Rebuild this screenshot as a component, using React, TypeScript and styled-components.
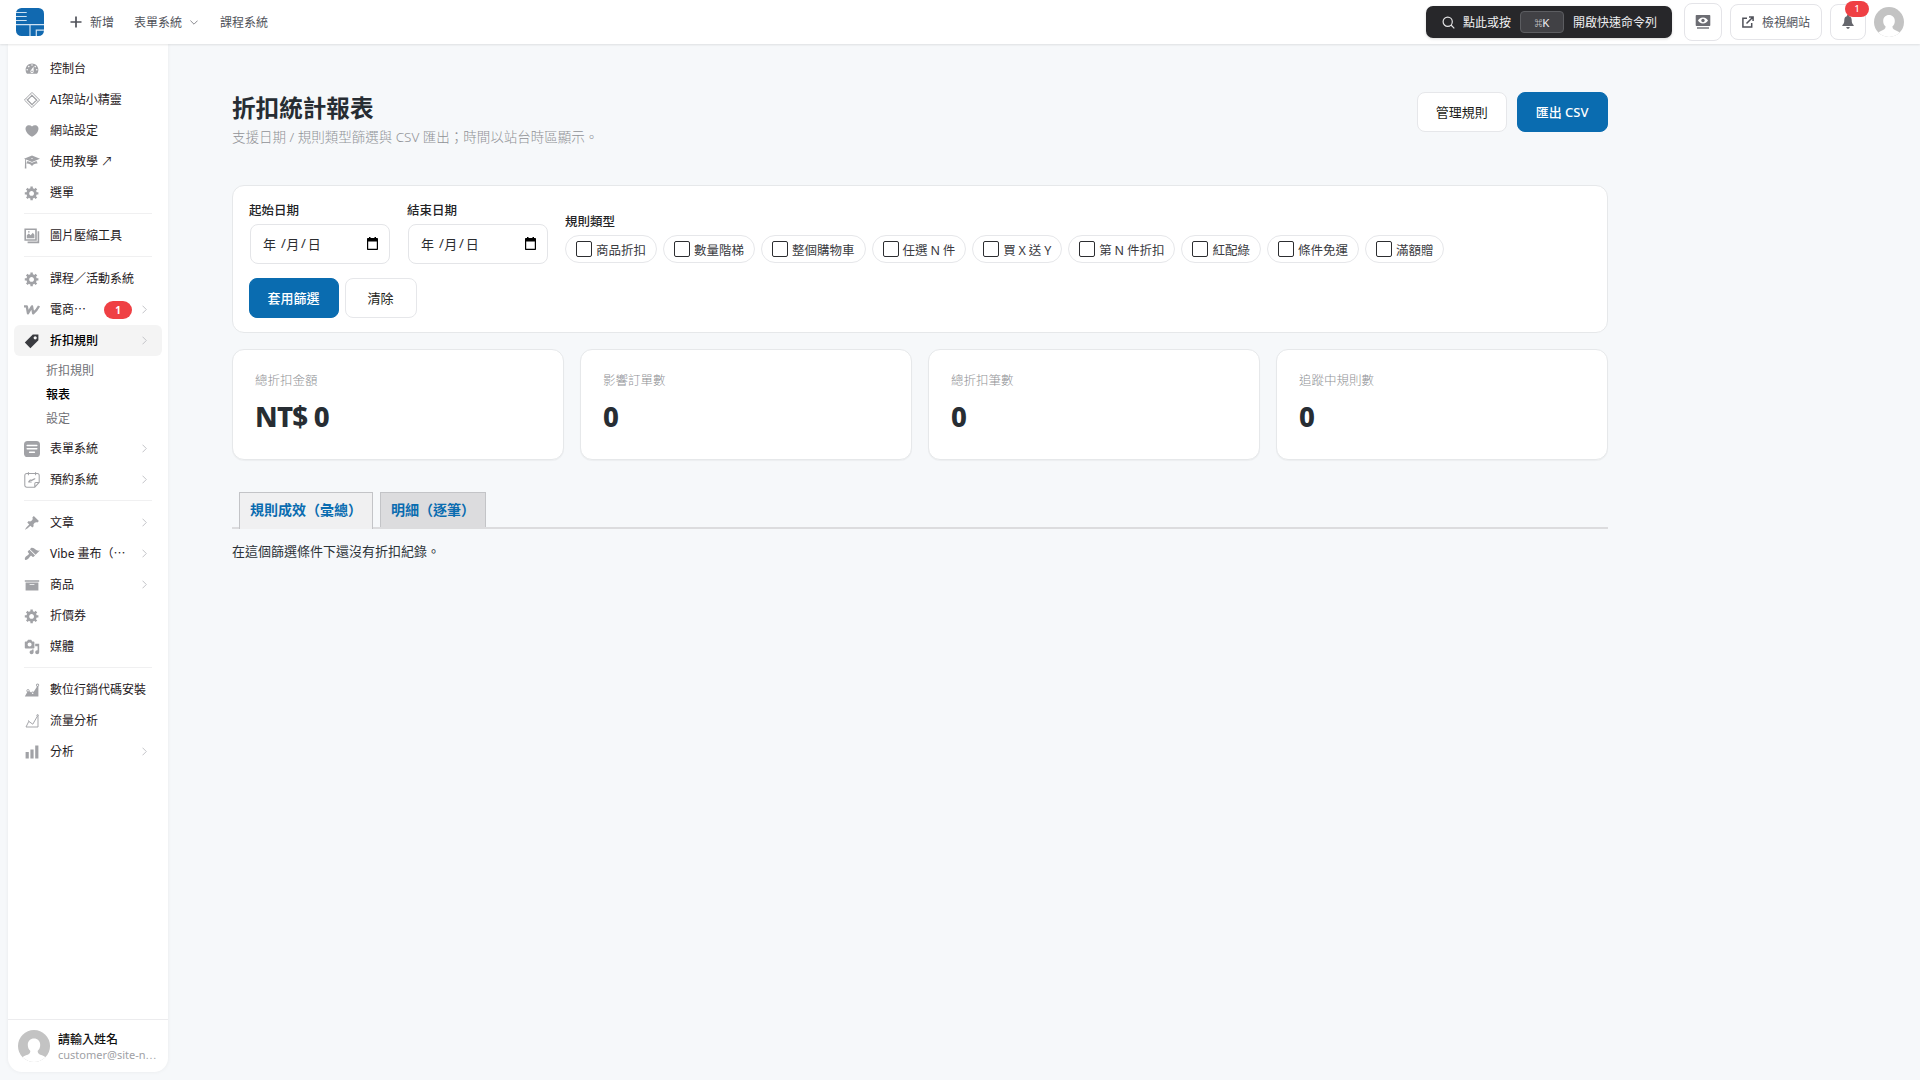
import React from "react";
import styled, { createGlobalStyle, css } from "styled-components";

const Global = createGlobalStyle`
  *, *::before, *::after { box-sizing: border-box; }
  html, body { margin: 0; height: 100%; }
  body {
    background: #f6f8fa;
    font-family: "Noto Sans", "Noto Sans CJK TC", sans-serif;
    font-size: 12px;
    color: #2c3338;
    overflow: hidden;
  }
  button { font-family: inherit; }
`;

/* ---------- layout ---------- */
const Page = styled.div`
  display: flex;
  flex-direction: column;
  height: 1080px;
`;
const TopBar = styled.header`
  display: flex;
  align-items: center;
  flex: none;
  height: 44px;
  padding: 0 16px;
  background: #fff;
  box-shadow: 0 1px 2px rgba(0, 0, 0, 0.1);
  position: relative;
  z-index: 2;
  color: #50525a;
`;
const Body = styled.div`
  display: flex;
  flex: 1;
  min-height: 0;
`;

/* ---------- top bar ---------- */
const Logo = styled.svg`
  display: block;
  width: 28px;
  height: 28px;
  margin-right: 26px;
`;
const TopText = styled.span`
  padding-top: 1px;
  line-height: 18px;
`;
const TopLink = styled.a<{ $after?: number }>`
  display: flex;
  align-items: center;
  gap: 8px;
  margin-right: ${(p) => p.$after ?? 0}px;
`;
const Spacer = styled.div`
  flex: 1;
`;
const CommandBar = styled.div`
  display: flex;
  align-items: center;
  width: 246px;
  height: 32px;
  padding-left: 16px;
  margin-right: 12px;
  border-radius: 7px;
  background: #27272a;
  color: #f0f0f2;
  box-shadow: 0 1px 3px rgba(0, 0, 0, 0.15);
`;
const CommandIcon = styled.svg`
  width: 13px;
  height: 13px;
  margin-right: 8px;
`;
const Kbd = styled.span`
  display: flex;
  align-items: center;
  justify-content: center;
  width: 44px;
  height: 22px;
  margin: 0 9px;
  border: 1px solid #5c5d61;
  border-radius: 4px;
  background: #414145;
  font-size: 11.5px;
`;
const KbdMark = styled.span`
  font-size: 7.5px;
  font-weight: 700;
  color: #fff;
`;
const TopButton = styled.button<{ $w: number; $h: number; $after: number }>`
  display: flex;
  align-items: center;
  justify-content: center;
  gap: 8px;
  position: relative;
  width: ${(p) => p.$w}px;
  height: ${(p) => p.$h}px;
  margin: 0 ${(p) => p.$after}px 0 0;
  padding: 0;
  border: 1px solid #e4e4e8;
  border-radius: 8px;
  background: #fff;
  color: #50525a;
  font-size: 12px;
`;
const BellBadge = styled.span`
  position: absolute;
  top: -4px;
  left: 14px;
  width: 24px;
  height: 16px;
  border-radius: 8px;
  background: #ef4044;
  color: #fff;
  font-size: 9px;
  font-weight: 500;
  line-height: 16px;
  text-align: center;
`;

/* ---------- sidebar ---------- */
const Sidebar = styled.aside`
  display: flex;
  flex-direction: column;
  flex: none;
  width: 160px;
  height: 1028px;
  margin-left: 8px;
  padding-top: 9px;
  border-radius: 0 0 14px 14px;
  background: #fff;
  box-shadow: 0 0 4px rgba(0, 0, 0, 0.06);
`;
const NavItem = styled.a<{ $active?: boolean }>`
  display: flex;
  align-items: center;
  flex: none;
  height: 31px;
  margin: 0 6px;
  padding: 0 15px 0 10px;
  border-radius: 6px;
  color: #1f2023;
  line-height: 18px;
  white-space: nowrap;
  ${(p) =>
    p.$active &&
    css`
      background: #f4f4f4;
      font-weight: 500;
      color: #000;
    `}
`;
const NavIcon = styled.svg<{ $dark?: boolean }>`
  flex: none;
  width: 16px;
  height: 16px;
  margin-right: 10px;
  color: ${(p) => (p.$dark ? "#3a3b40" : "#a1a2a6")};
  overflow: visible;
`;
const NavText = styled.span`
  flex: 1;
`;
const NavBadge = styled.span`
  width: 28px;
  height: 18px;
  margin-right: 10px;
  border-radius: 9px;
  background: #ef4044;
  color: #fff;
  font-size: 10px;
  font-weight: 700;
  line-height: 18px;
  text-align: center;
`;
const Divider = styled.hr`
  flex: none;
  width: 128px;
  height: 1px;
  margin: 5px 16px 6px;
  border: 0;
  background: #f0f0f1;
`;
const SubMenu = styled.div`
  display: flex;
  flex-direction: column;
  flex: none;
  padding: 3px 0 2px 38px;
`;
const SubItem = styled.a<{ $current?: boolean }>`
  height: 24px;
  line-height: 24px;
  color: ${(p) => (p.$current ? "#000" : "#6f7075")};
  font-weight: ${(p) => (p.$current ? 500 : 400)};
`;
const Profile = styled.div`
  display: flex;
  align-items: center;
  gap: 8px;
  height: 53px;
  margin-top: auto;
  padding: 0 10px;
  border-top: 1px solid #ececee;
`;
const ProfileText = styled.div`
  display: flex;
  flex-direction: column;
  padding-top: 1px;
  white-space: nowrap;
`;
const ProfileName = styled.span`
  font-size: 12px;
  font-weight: 500;
  line-height: 17px;
  color: #111;
`;
const ProfileMail = styled.span`
  font-size: 11px;
  line-height: 14px;
  color: #a0a1a5;
`;
const Ellipsis = styled.span`
  font-family: "Noto Sans CJK TC", sans-serif;
  font-size: 10px;
`;

/* ---------- content ---------- */
const Main = styled.main`
  width: 1376px;
  margin: 0 0 0 64px;
  padding-top: 48px;
`;
const PageHead = styled.div`
  display: flex;
  align-items: flex-start;
  justify-content: space-between;
  height: 93px;
`;
const Title = styled.h1`
  margin: 0;
  font-size: 23.6px;
  font-weight: 700;
  line-height: 32px;
  color: #272d33;
`;
const Subtitle = styled.p`
  margin: 3px 0 0;
  font-size: 13.5px;
  font-weight: 300;
  line-height: 20px;
  color: #909296;
`;
const Actions = styled.div<{ $gap: number }>`
  display: flex;
  gap: ${(p) => p.$gap}px;
`;
const Button = styled.button<{ $primary?: boolean }>`
  height: 40px;
  min-width: 72px;
  padding: 0 18.5px 1px 17.5px;
  border: 1px solid ${(p) => (p.$primary ? "#0a6cb0" : "#e6e7ea")};
  border-radius: 8px;
  background: ${(p) => (p.$primary ? "#0a6cb0" : "#fff")};
  color: ${(p) => (p.$primary ? "#fff" : "#1d1e20")};
  font-size: 13px;
  font-weight: ${(p) => (p.$primary ? 500 : 400)};
  line-height: 20px;
  white-space: nowrap;
`;
const Card = styled.section`
  border: 1px solid #e6e8ea;
  border-radius: 12px;
  background: #fff;
`;
const FilterCard = styled(Card)`
  height: 148px;
  padding: 14px 16px;
`;
const FilterRow = styled.div`
  display: flex;
  align-items: flex-end;
  gap: 16px;
  height: 65px;
  margin-bottom: 13px;
`;
const Field = styled.div<{ $w?: number }>`
  display: flex;
  flex-direction: column;
  width: ${(p) => (p.$w ? `${p.$w}px` : "auto")};
`;
const Label = styled.span`
  margin-bottom: 4px;
  font-size: 12.5px;
  font-weight: 500;
  line-height: 18px;
  color: #222326;
`;
const DateBox = styled.div`
  display: flex;
  align-items: center;
  height: 40px;
  margin: 0 1px 1px;
  padding: 0 11px 2px 12px;
  border: 1px solid #e4e5e8;
  border-radius: 8px;
  font-size: 13px;
  color: #2c2d30;
`;
const Slash = styled.span<{ $before: number; $after: number }>`
  margin: 0 ${(p) => p.$after}px 0 ${(p) => p.$before}px;
`;
const CalendarIcon = styled.svg`
  width: 11px;
  height: 13px;
  margin: 1px 0 0 auto;
`;
const Chips = styled.div`
  display: flex;
  gap: 6px;
  margin-bottom: 2px;
`;
const Chip = styled.label`
  display: flex;
  align-items: center;
  gap: 4px;
  height: 28px;
  padding: 0 10px;
  border: 1px solid #e6e7ea;
  border-radius: 14px;
  font-size: 12.5px;
  word-spacing: -0.4px;
  color: #3a3b3f;
  white-space: nowrap;
`;
const Check = styled.span`
  width: 16px;
  height: 16px;
  border: 1px solid #2c2d30;
  border-radius: 2px;
`;
const Stats = styled.div`
  display: grid;
  grid-template-columns: repeat(4, 1fr);
  gap: 16px;
  margin-top: 16px;
`;
const StatCard = styled(Card)`
  height: 111px;
  padding: 22px;
  box-shadow: 0 1px 1px rgba(0, 0, 0, 0.04);
`;
const StatLabel = styled.div`
  font-size: 12.5px;
  font-weight: 300;
  line-height: 18px;
  color: #909296;
`;
const StatValue = styled.div`
  margin-top: 9px;
  font-size: 27.5px;
  font-weight: 800;
  letter-spacing: -0.7px;
  line-height: 36px;
  color: #272d33;
`;
const Tabs = styled.div`
  display: flex;
  align-items: flex-end;
  gap: 7px;
  height: 69px;
  padding-left: 7px;
  border-bottom: 2px solid #dcdcde;
`;
const Tab = styled.a<{ $active?: boolean }>`
  height: ${(p) => (p.$active ? 37 : 35)}px;
  margin-bottom: ${(p) => (p.$active ? -2 : 0)}px;
  padding: 0 10px;
  border: 1px solid #c3c4c7;
  border-bottom: 0;
  background: ${(p) => (p.$active ? "#f0f0f1" : "#dcdcde")};
  color: #0a6cb0;
  font-size: 14px;
  font-weight: 700;
  line-height: 34px;
`;
const Message = styled.p`
  margin: 12px 0 0;
  font-size: 13px;
  line-height: 20px;
  color: #2c3338;
`;

/* ---------- icons ---------- */
const glyphs: Record<string, string> = {
  dashboard:
    "M3.76 16h12.48c1.1-1.37 1.76-3.11 1.76-5 0-4.42-3.58-8-8-8s-8 3.58-8 8c0 1.89.66 3.63 1.76 5zM10 4c.55 0 1 .45 1 1s-.45 1-1 1-1-.45-1-1 .45-1 1-1zM6 6c.55 0 1 .45 1 1s-.45 1-1 1-1-.45-1-1 .45-1 1-1zm8 0c.55 0 1 .45 1 1s-.45 1-1 1-1-.45-1-1 .45-1 1-1zm-5.37 5.55L12 7v6c0 1.1-.9 2-2 2s-2-.9-2-2c0-.57.24-1.08.63-1.45zM4 10c.55 0 1 .45 1 1s-.45 1-1 1-1-.45-1-1 .45-1 1-1zm12 0c.55 0 1 .45 1 1s-.45 1-1 1-1-.45-1-1 .45-1 1-1zm-5 3c0-.55-.45-1-1-1s-1 .45-1 1 .45 1 1 1 1-.45 1-1z",
  heart:
    "M10 17.12c3.33-1.4 5.74-3.79 7.04-6.21 1.28-2.41 1.46-4.81.32-6.25-1.03-1.29-2.37-1.78-3.73-1.74s-2.68.63-3.63 1.46c-.95-.83-2.27-1.42-3.63-1.46s-2.7.45-3.73 1.74c-1.14 1.44-.96 3.84.34 6.25 1.28 2.42 3.69 4.81 7.02 6.21z",
  cap:
    "M10 10L2.54 7.02 3 18H1l.48-11.41L0 6l10-4 10 4zm0-5c-.55 0-1 .22-1 .5s.45.5 1 .5 1-.22 1-.5-.45-.5-1-.5zm0 6l5.57-2.23c.71.94 1.2 2.07 1.36 3.3-.3-.04-.61-.07-.93-.07-2.55 0-4.78 1.37-6 3.41C8.78 13.37 6.55 12 4 12c-.32 0-.63.03-.93.07.16-1.23.65-2.36 1.36-3.3z",
  gear:
    "M18 12h-2.18c-.17.7-.44 1.35-.81 1.93l1.54 1.54-2.1 2.1-1.54-1.54c-.58.36-1.23.63-1.91.79V19H8v-2.18c-.68-.16-1.33-.43-1.91-.79l-1.54 1.54-2.12-2.12 1.54-1.54c-.36-.58-.63-1.23-.79-1.91H1V9.03h2.17c.16-.7.44-1.35.8-1.94L2.43 5.55l2.1-2.1 1.54 1.54c.58-.37 1.24-.64 1.93-.81V2h3v2.18c.68.16 1.33.43 1.91.79l1.54-1.54 2.12 2.12-1.54 1.54c.36.59.64 1.24.8 1.94H18V12zm-8.5 1.5c1.66 0 3-1.34 3-3s-1.34-3-3-3-3 1.34-3 3 1.34 3 3 3z",
  tag: "M11 2h7v7L8 19l-7-7zm3 6c1.1 0 2-.9 2-2s-.9-2-2-2-2 .9-2 2 .9 2 2 2z",
  pin:
    "M10.44 3.02l1.82-1.82 6.36 6.35-1.83 1.82c-1.05-.68-2.48-.57-3.41.36l-.75.75c-.92.93-1.04 2.35-.35 3.41l-1.83 1.82-2.41-2.41-2.8 2.79c-.42.42-3.38 2.71-3.8 2.29s1.86-3.39 2.28-3.81l2.79-2.79L4.1 9.36l1.83-1.82c1.05.69 2.48.57 3.4-.36l.75-.75c.93-.92 1.05-2.35.36-3.41z",
  brush:
    "M14.48 11.06L7.41 3.99l1.5-1.5c.5-.56 2.3-.47 3.51.32 1.21.8 1.43 1.28 2.91 2.1 1.18.64 2.45 1.26 4.45.85zm-.71.71L6.7 4.7 4.93 6.47c-.39.39-.39 1.02 0 1.41l1.06 1.06c.39.39.39 1.03 0 1.42-.6.6-1.43 1.11-2.21 1.69-.35.26-.7.53-1.01.84C1.43 14.23.4 16.08 1.4 17.07c.99 1 2.84-.03 4.18-1.36.31-.31.58-.66.85-1.02.57-.78 1.08-1.61 1.69-2.21.39-.39 1.02-.39 1.41 0l1.06 1.06c.39.39 1.02.39 1.41 0z",
  archive: "M19 4v2H1V4h18zM2 7h16v10H2V7zm11 3V9H7v1h6z",
  media:
    "M13 11V4c0-.55-.45-1-1-1h-1.67L9 1H5L3.67 3H2c-.55 0-1 .45-1 1v7c0 .55.45 1 1 1h10c.55 0 1-.45 1-1zM7 4.5c1.38 0 2.5 1.12 2.5 2.5S8.38 9.5 7 9.5 4.5 8.38 4.5 7 5.62 4.5 7 4.5zM14 6h5v10.5c0 1.38-1.12 2.5-2.5 2.5S14 17.88 14 16.5s1.12-2.5 2.5-2.5c.17 0 .34.02.5.05V9h-3V6zm-4 8.05V13h2v3.5c0 1.38-1.12 2.5-2.5 2.5S7 17.88 7 16.5 8.12 14 9.5 14c.17 0 .34.02.5.05z",
  area:
    "M18 18l.01-12.28c.59-.35.99-.99.99-1.72 0-1.1-.9-2-2-2s-2 .9-2 2c0 .8.47 1.48 1.14 1.8l-4.13 6.58c-.33-.24-.73-.38-1.16-.38-.84 0-1.55.51-1.85 1.24l-2.14-1.53c.09-.22.14-.46.14-.71 0-1.11-.89-2-2-2-1.1 0-2 .89-2 2 0 .73.4 1.36.98 1.71L1 18h17zM17 3c.55 0 1 .45 1 1s-.45 1-1 1-1-.45-1-1 .45-1 1-1zM5 10c.55 0 1 .45 1 1s-.45 1-1 1-1-.45-1-1 .45-1 1-1zm5.85 3c.55 0 1 .45 1 1s-.45 1-1 1-1-.45-1-1 .45-1 1-1z",
  bars: "M18 18V2h-4v16h4zm-6 0V7H8v11h4zm-6 0v-8H2v8h4z",
};

const drawings: Record<string, React.ReactNode> = {
  diamond: (
    <g fill="none" stroke="currentColor" strokeLinejoin="round">
      <path strokeWidth="1.2" d="M10 .5L19.500 10 10 19.500.5 10z" />
      <path strokeWidth="1.4" d="M10 4.200l5.800 5.800-5.800 5.800L4.200 10z" />
      <path strokeWidth="0.8" d="M8 2.500l9.500 9.500M12 17.500L2.500 8" />
    </g>
  ),
  images: (
    <g fill="none" stroke="currentColor">
      <path strokeWidth="2" d="M1.500 1.500h13.500v13.500H1.500z" />
      <path strokeWidth="2" d="M18 4v14H4.500" />
      <path fill="currentColor" stroke="none" d="M3.500 12.800V9l2.500-2 2.300 2.200L11 6l2 2.500v4.300zM5 4h2v1.600H5z" />
    </g>
  ),
  woo: (
    <path
      fill="none"
      stroke="currentColor"
      strokeWidth="3"
      strokeLinejoin="round"
      d="M0 5.500h3.500L5 14l5-8.500 1.500 8.500C14 12 17 8.500 18.800 5"
    />
  ),
  form: (
    <g>
      <rect width="20" height="20" rx="4.500" fill="currentColor" />
      <path fill="none" stroke="#fff" strokeWidth="1.900" strokeLinecap="round" d="M4 5.500h12M4 9.800h12M7 14h6" />
    </g>
  ),
  booking: (
    <g fill="none" stroke="currentColor" strokeWidth="1.300" strokeLinecap="round" strokeLinejoin="round">
      <path d="M3.500 2h13c1.500 0 2.500 1 2.500 2.500V13l-5.500 6H3.500C2 19 1 18 1 16.500v-12C1 3 2 2 3.500 2zM19 13h-4c-1 0-1.500.5-1.500 1.500V19M5.500.5v3M14.500.5v3" />
      <path strokeWidth="1.500" d="M6 12l2-2 1.500.5L13.500 8.500M6 12.500h3" />
    </g>
  ),
  line: (
    <path
      fill="none"
      stroke="currentColor"
      strokeWidth="1.200"
      d="M17.500 4v13.500H2.500l3.500-7 5 3.500 6-10.500M16 3a1 1 0 1 0 2 0 1 1 0 1 0-2 0M5 9.500l1.500 1"
    />
  ),
};

function Icon({ name, dark }: { name: string; dark?: boolean }) {
  return (
    <NavIcon viewBox="0 0 20 20" $dark={dark}>
      {glyphs[name] ? <path fill="currentColor" fillRule="evenodd" d={glyphs[name]} /> : drawings[name]}
    </NavIcon>
  );
}

const ChevronSvg = styled.svg`
  flex: none;
  width: 5px;
  height: 9px;
`;
function Chevron() {
  return (
    <ChevronSvg viewBox="0 0 5 9">
      <path d="M.5.7l3.800 3.800L.5 8.300" fill="none" stroke="#c3c4c8" />
    </ChevronSvg>
  );
}

const AvatarSvg = styled.svg<{ $size: number }>`
  display: block;
  flex: none;
  width: ${(p) => p.$size}px;
  height: ${(p) => p.$size}px;
  border-radius: 50%;
`;
function Avatar({ size }: { size: number }) {
  return (
    <AvatarSvg viewBox="0 0 32 32" $size={size}>
      <rect width="32" height="32" fill="#c3c3c3" />
      <path
        fill="#fff"
        d="M16 8.500c-3.600 0-6.200 2.700-6.200 6.400 0 2.500 1 4.700 2.600 6-.2 2.800-2 3.600-4.400 4.400-1.400.5-3 1.300-4 2.700V32h24v-4c-1-1.400-2.600-2.200-4-2.700-2.400-.8-4.200-1.600-4.400-4.400 1.600-1.300 2.600-3.500 2.600-6 0-3.700-2.600-6.400-6.200-6.400z"
      />
    </AvatarSvg>
  );
}

/* ---------- data ---------- */
type Entry = { icon: string; label: string; arrow?: boolean; badge?: string; active?: boolean; children?: string[] };
const groups: Entry[][] = [
  [
    { icon: "dashboard", label: "控制台" },
    { icon: "diamond", label: "AI架站小精靈" },
    { icon: "heart", label: "網站設定" },
    { icon: "cap", label: "使用教學 ↗" },
    { icon: "gear", label: "選單" },
  ],
  [{ icon: "images", label: "圖片壓縮工具" }],
  [
    { icon: "gear", label: "課程／活動系統" },
    { icon: "woo", label: "電商⋯", badge: "1", arrow: true },
    { icon: "tag", label: "折扣規則", arrow: true, active: true, children: ["折扣規則", "報表", "設定"] },
    { icon: "form", label: "表單系統", arrow: true },
    { icon: "booking", label: "預約系統", arrow: true },
  ],
  [
    { icon: "pin", label: "文章", arrow: true },
    { icon: "brush", label: "Vibe 畫布（⋯", arrow: true },
    { icon: "archive", label: "商品", arrow: true },
    { icon: "gear", label: "折價券" },
    { icon: "media", label: "媒體" },
  ],
  [
    { icon: "area", label: "數位行銷代碼安裝" },
    { icon: "line", label: "流量分析" },
    { icon: "bars", label: "分析", arrow: true },
  ],
];
const chips = ["商品折扣", "數量階梯", "整個購物車", "任選 N 件", "買 X 送 Y", "第 N 件折扣", "紅配綠", "條件免運", "滿額贈"];
const stats = [
  ["總折扣金額", "NT$ 0"],
  ["影響訂單數", "0"],
  ["總折扣筆數", "0"],
  ["追蹤中規則數", "0"],
];

function DateField({ label }: { label: string }) {
  return (
    <Field $w={142}>
      <Label>{label}</Label>
      <DateBox>
        <span>年</span>
        <Slash $before={5} $after={0.5}>/</Slash>
        <span>月</span>
        <Slash $before={1.5} $after={2}>/</Slash>
        <span>日</span>
        <CalendarIcon viewBox="0 0 11 13">
          <path fillRule="evenodd" d="M1 1h1V0h1.500v1h4V0H9v1h1c.6 0 1 .4 1 1v10c0 .6-.4 1-1 1H1c-.6 0-1-.4-1-1V2c0-.6.4-1 1-1zm.2 3.500v7.300h8.600V4.500z" />
        </CalendarIcon>
      </DateBox>
    </Field>
  );
}

export default function App() {
  return (
    <Page>
      <Global />
      <TopBar>
        <Logo viewBox="0 0 28 28">
          <rect width="28" height="28" rx="5.500" fill="#1169b0" />
          <path
            d="M0 4.500h10.700M0 8.500h10.700M0 12.500h10.700M0 16.700h28M14 17v11M20.300 28v-5.800H28"
            fill="none"
            stroke="#cfe2f2"
            strokeWidth="1.200"
          />
        </Logo>
        <TopLink $after={20}>
          <svg width="12" height="12" viewBox="0 0 12 12">
            <path d="M6 .5v11M.5 6h11" stroke="#50525a" strokeWidth="1.700" />
          </svg>
          <TopText>新增</TopText>
        </TopLink>
        <TopLink $after={22}>
          <TopText>表單系統</TopText>
          <svg width="8" height="5" viewBox="0 0 8 5">
            <path d="M.4.6L4 4.200 7.600.6" fill="none" stroke="#8a8b90" />
          </svg>
        </TopLink>
        <TopLink>
          <TopText>課程系統</TopText>
        </TopLink>
        <Spacer />
        <CommandBar>
          <CommandIcon viewBox="0 0 13 13">
            <g fill="none" stroke="#e4e4e6" strokeWidth="1.200">
              <circle cx="5.700" cy="5.700" r="4.600" />
              <path d="M9 9l3.300 3.300" />
            </g>
          </CommandIcon>
          <TopText>點此或按</TopText>
          <Kbd>
            <KbdMark>⌘</KbdMark>K
          </Kbd>
          <TopText>開啟快速命令列</TopText>
        </CommandBar>
        <TopButton $w={38} $h={38} $after={8}>
          <svg width="16" height="16" viewBox="0 0 16 16">
            <path
              fill="#6c6d73"
              fillRule="evenodd"
              d="M1.500 1h13c.5 0 .8.300.8.800v9.400c0 .5-.3.800-.8.800h-13c-.5 0-.8-.3-.8-.800V1.800c0-.5.3-.8.8-.8zM8 3.500C5.500 3.500 3.700 5 3 6.500 3.700 8 5.500 9.500 8 9.500s4.300-1.500 5-3c-.7-1.500-2.500-3-5-3z"
            />
            <circle cx="8" cy="6.500" r="1.700" fill="#6c6d73" />
            <path d="M2 14h12" stroke="#6c6d73" strokeWidth="1.400" />
          </svg>
        </TopButton>
        <TopButton $w={92} $h={36} $after={8}>
          <svg width="12" height="12" viewBox="0 0 12 12">
            <path
              d="M5 2.300H.9v8.800h8.800V7M7 .9h4.100V5M11 1L4.500 7.500"
              fill="none"
              stroke="#50525a"
              strokeWidth="1.500"
            />
          </svg>
          <TopText>檢視網站</TopText>
        </TopButton>
        <TopButton $w={36} $h={36} $after={8}>
          <svg width="12" height="14" viewBox="0 0 12 14">
            <path
              fill="#66676d"
              d="M6 0c.7 0 1.200.5 1.200 1.200C8.900 1.700 9.700 3 9.700 5c0 3 .7 4 2 5.200v.8H.3v-.8C1.600 9 2.300 8 2.300 5c0-2 .8-3.300 2.500-3.800C4.800.5 5.300 0 6 0zM4.300 12h3.400c0 1-.7 1.800-1.700 1.800S4.300 13 4.300 12z"
            />
          </svg>
          <BellBadge>1</BellBadge>
        </TopButton>
        <Avatar size={30} />
      </TopBar>
      <Body>
        <Sidebar>
          {groups.map((group, g) => (
            <React.Fragment key={g}>
              {g > 0 && <Divider />}
              {group.map((item) => (
                <React.Fragment key={item.label}>
                  <NavItem $active={item.active}>
                    <Icon name={item.icon} dark={item.active} />
                    <NavText>{item.label}</NavText>
                    {item.badge && <NavBadge>{item.badge}</NavBadge>}
                    {item.arrow && <Chevron />}
                  </NavItem>
                  {item.children && (
                    <SubMenu>
                      {item.children.map((c) => (
                        <SubItem key={c} $current={c === "報表"}>
                          {c}
                        </SubItem>
                      ))}
                    </SubMenu>
                  )}
                </React.Fragment>
              ))}
            </React.Fragment>
          ))}
          <Profile>
            <Avatar size={32} />
            <ProfileText>
              <ProfileName>請輸入姓名</ProfileName>
              <ProfileMail>
                customer@site-n<Ellipsis>⋯</Ellipsis>
              </ProfileMail>
            </ProfileText>
          </Profile>
        </Sidebar>
        <Main>
          <PageHead>
            <div>
              <Title>折扣統計報表</Title>
              <Subtitle>支援日期 / 規則類型篩選與 CSV 匯出；時間以站台時區顯示。</Subtitle>
            </div>
            <Actions $gap={10}>
              <Button>管理規則</Button>
              <Button $primary>匯出 CSV</Button>
            </Actions>
          </PageHead>
          <FilterCard>
            <FilterRow>
              <DateField label="起始日期" />
              <DateField label="結束日期" />
              <Field>
                <Label>規則類型</Label>
                <Chips>
                  {chips.map((c) => (
                    <Chip key={c}>
                      <Check />
                      {c}
                    </Chip>
                  ))}
                </Chips>
              </Field>
            </FilterRow>
            <Actions $gap={6}>
              <Button $primary>套用篩選</Button>
              <Button>清除</Button>
            </Actions>
          </FilterCard>
          <Stats>
            {stats.map(([label, value]) => (
              <StatCard key={label}>
                <StatLabel>{label}</StatLabel>
                <StatValue>{value}</StatValue>
              </StatCard>
            ))}
          </Stats>
          <Tabs>
            <Tab $active>規則成效（彙總）</Tab>
            <Tab>明細（逐筆）</Tab>
          </Tabs>
          <Message>在這個篩選條件下還沒有折扣紀錄。</Message>
        </Main>
      </Body>
    </Page>
  );
}
